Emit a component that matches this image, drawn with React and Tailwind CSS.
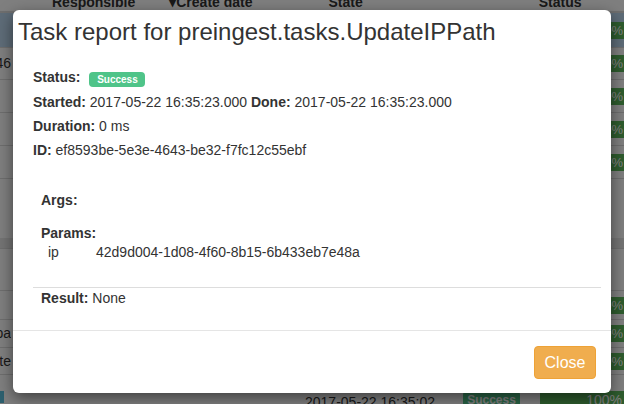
import React from "react";

function Bar({ text, pr = "pr-[1px]" }) {
  return (
    <div className={`ml-auto flex h-[17px] w-[84px] items-center justify-end rounded-l-[3px] bg-[#5cb85c] ${pr} text-[13px] leading-[17px] text-white`}>
      {text}
    </div>
  );
}

function Row({ h, left, bar, bg = "", children, align = "items-center" }) {
  return (
    <div className={`flex ${align} border-t border-[#dddddd] ${h} ${bg}`}>
      <div className="flex w-[11px] justify-end overflow-hidden whitespace-nowrap text-[14px] text-[#333]">
        {left}
      </div>
      <div className="flex flex-1 items-center">{children}</div>
      {bar ? <Bar text={bar} /> : null}
    </div>
  );
}

function Background() {
  return (
    <div className="flex flex-col">
      <div className="h-[13px] overflow-hidden border-b-2 border-[#dddddd] text-[14px] font-bold text-[#333]">
        <div className="-mt-[5px] flex leading-[14px]">
          <span className="ml-[52px]">Responsible</span>
          <span className="ml-[34px]">▾Create date</span>
          <span className="ml-[76px]">State</span>
          <span className="ml-[176px]">Status</span>
        </div>
      </div>
      <div className="flex h-[34px] items-center bg-[#bcd8f0]">
        <div className="flex-1" />
        <Bar text="80%" />
      </div>
      <Row h="h-[32px]" left="146" bar="50%" />
      <Row h="h-[33px]" left="" bar="100%" />
      <Row h="h-[33px]" left="" bar="100%" />
      <Row h="h-[33px]" left="" bar="67%" />
      <div className="h-[60px] border-t border-[#dddddd]" />
      <div className="h-[10px] bg-[#e8e8e8]" />
      <Row h="h-[42px]" left="" />
      <Row h="h-[29px]" left="" bar="100%" />
      <Row h="h-[28px]" left="pa" bar="100%" />
      <Row h="h-[27px]" left="ate" bar="100%" />
      <div className="flex h-[40px] items-start border-t border-[#dddddd] pt-[16px]">
        <div className="mt-[0px] h-[12px] w-[4px] bg-[#5bc0de]" />
        <div className="ml-[301px] mt-[3px] text-[14px] leading-[16px] text-[#333]">2017-05-22 16:35:02</div>
        <div className="ml-[28px] flex h-[18px] w-[57px] items-center justify-center rounded-[4px] bg-[#52c78a] text-[12px] font-bold text-white">
          Success
        </div>
        <div className="ml-auto flex h-[18px] w-[84px] items-center justify-end bg-[#5cb85c] pr-[2px] text-[14px] text-white">
          100%
        </div>
      </div>
    </div>
  );
}

export default function App() {
  return (
    <div className="relative h-[404px] w-[624px] overflow-hidden bg-white font-['Liberation_Sans',Arial,sans-serif]">
      <Background />
      <div className="absolute inset-0 bg-black/50">
        <div className="ml-[13px] mt-[10px] w-[598px] rounded-[6px] bg-white shadow-[0_5px_15px_rgba(0,0,0,0.5)]">
          <h3 className="pl-[5px] pt-[9px] text-[24px] font-normal leading-[26.4px] text-[#333]">
            Task report for preingest.tasks.UpdateIPPath
          </h3>
          <div className="pb-[22px] pl-[20px] pr-[10px] text-[14px] text-[#333]">
            <div className="mt-[20px] leading-[24.3px]">
              <div>
                <b>Status:</b>
                <span className="relative top-[1px] ml-[9px] inline-block h-[15px] w-[56px] rounded-[4px] bg-[#4fc489] text-center text-[10px] font-bold leading-[15px] text-white">
                  Success
                </span>
              </div>
              <div>
                <b>Started:</b> 2017-05-22 16:35:23.000 <b>Done:</b> 2017-05-22 16:35:23.000
              </div>
              <div>
                <b>Duration:</b> 0 ms
              </div>
              <div>
                <b>ID:</b> ef8593be-5e3e-4643-be32-f7fc12c55ebf
              </div>
            </div>
            <div className="mt-[27.6px] pl-[8px]">
              <div className="font-bold leading-[20px]">Args:</div>
              <div className="mt-[13px] font-bold leading-[20px]">Params:</div>
              <div className="flex pl-[7px] leading-[18px]">
                <div className="w-[48px]">ip</div>
                <div>42d9d004-1d08-4f60-8b15-6b433eb7e48a</div>
              </div>
            </div>
            <div className="mt-[25.9px] border-t border-[#dddddd]" />
            <div className="pl-[8px] leading-[20px]">
              <b>Result:</b> None
            </div>
          </div>
          <div className="flex justify-end border-t border-[#e5e5e5] pb-[14px] pr-[15px] pt-[15px]">
            <button className="h-[33px] w-[62px] rounded-[4px] border border-[#eea236] bg-[#f0ad4e] text-[16px] leading-[20px] text-white">
              Close
            </button>
          </div>
        </div>
      </div>
    </div>
  );
}
